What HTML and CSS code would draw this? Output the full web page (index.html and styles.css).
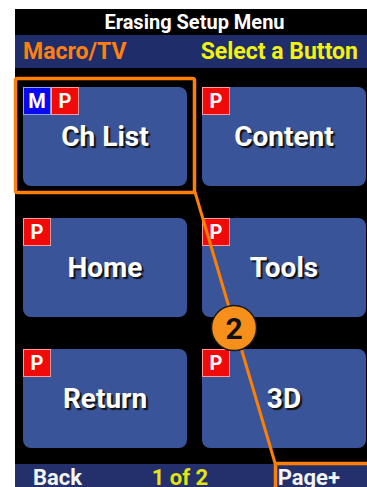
FILE: index.html
```html
<!DOCTYPE html>
<html lang="en">
<head>
  <meta charset="UTF-8">
  <meta name="viewport" content="width=device-width, initial-scale=1.0">
  <title>Erasing Setup Menu</title>
  <link rel="stylesheet" href="styles.css">
</head>
<body>
  <div class="screen">
    <div class="title">Erasing Setup Menu</div>
    <div class="status">
      <span class="mode">Macro/TV</span>
      <span class="hint">Select a Button</span>
    </div>
    <div class="grid">
      <div class="key">
        <div class="tags"><span class="tag tag-m">M</span><span class="tag tag-p">P</span></div>
        <span class="label">Ch List</span>
      </div>
      <div class="key">
        <div class="tags"><span class="tag tag-p">P</span></div>
        <span class="label">Content</span>
      </div>
      <div class="key">
        <div class="tags"><span class="tag tag-p">P</span></div>
        <span class="label">Home</span>
      </div>
      <div class="key">
        <div class="tags"><span class="tag tag-p">P</span></div>
        <span class="label">Tools</span>
      </div>
      <div class="key">
        <div class="tags"><span class="tag tag-p">P</span></div>
        <span class="label">Return</span>
      </div>
      <div class="key">
        <div class="tags"><span class="tag tag-p">P</span></div>
        <span class="label">3D</span>
      </div>
    </div>
    <div class="footer">
      <span class="soft">Back</span>
      <span class="page">1 of 2</span>
      <span class="soft">Page+</span>
    </div>
  </div>

  <!-- annotation callout drawn over the screenshot -->
  <svg class="callout" width="367" height="487" viewBox="0 0 367 487">
    <rect x="15.5" y="78.5" width="179" height="114" rx="2" fill="none" stroke="#ff7f00" stroke-width="3.5"/>
    <line x1="195" y1="192" x2="275" y2="463" stroke="#ff7f00" stroke-width="3"/>
    <rect x="275.5" y="463.5" width="100" height="30" fill="none" stroke="#ff7f00" stroke-width="3.5"/>
    <circle cx="234" cy="328" r="22.5" fill="#f7901a" stroke="#1a1a1a" stroke-width="1.5"/>
    <text x="234" y="339" text-anchor="middle" class="num">2</text>
  </svg>
</body>
</html>
```

FILE: styles.css
```css
body {
  margin: 0;
  background-color: #fff;
  font-family: Roboto, "Liberation Sans", Arial, sans-serif;
  width: 367px;
  height: 487px;
  overflow: hidden;
  position: relative;
}
.screen {
  margin: 9px 0 0 15px;
  width: 359px;
  height: 490px;
  background-color: #000;
  display: flex;
  flex-direction: column;
}
.title {
  height: 26px;
  line-height: 26px;
  text-align: center;
  color: #fff;
  font-weight: bold;
  font-size: 20px;
}
.status {
  height: 33px;
  background-color: #1f2d6b;
  display: flex;
  justify-content: space-between;
  align-items: center;
  padding: 0 16px 0 8px;
  font-weight: bold;
  font-size: 23px;
}
.mode {
  color: #ff7f10;
}
.hint {
  color: #f2f20a;
}
.grid {
  display: grid;
  grid-template-columns: 164px 164px;
  grid-auto-rows: 99px;
  column-gap: 15px;
  row-gap: 32px;
  padding: 19px 8px 0 8px;
}
.key {
  position: relative;
  background-color: #3a5499;
  border-radius: 8px;
  display: flex;
  align-items: center;
  justify-content: center;
}
.tags {
  position: absolute;
  top: 0;
  left: 0;
  display: flex;
}
.tag {
  width: 28px;
  height: 28px;
  box-sizing: border-box;
  color: #fff;
  font-weight: bold;
  font-size: 20px;
  line-height: 26px;
  text-align: center;
}
.tag-m {
  background-color: #0a0af0;
  border: 1px solid #8f9fff;
}
.tag-p {
  background-color: #f00a0a;
  border: 1px solid #ff9a9a;
}
.label {
  color: #fff;
  font-weight: bold;
  font-size: 28px;
  text-shadow: 2px 2px 1px #111;
}
.footer {
  margin-top: 16px;
  height: 26px;
  background-color: #23306c;
  display: flex;
  align-items: center;
  justify-content: space-between;
  padding: 0 34px 0 18px;
  font-weight: bold;
  font-size: 22px;
}
.soft {
  color: #f4f4f4;
}
.page {
  color: #e4e410;
}
.callout {
  position: absolute;
  top: 0;
  left: 0;
}
.num {
  font-family: Roboto, "Liberation Sans", Arial, sans-serif;
  font-weight: bold;
  font-size: 30px;
  fill: #111;
}
```
